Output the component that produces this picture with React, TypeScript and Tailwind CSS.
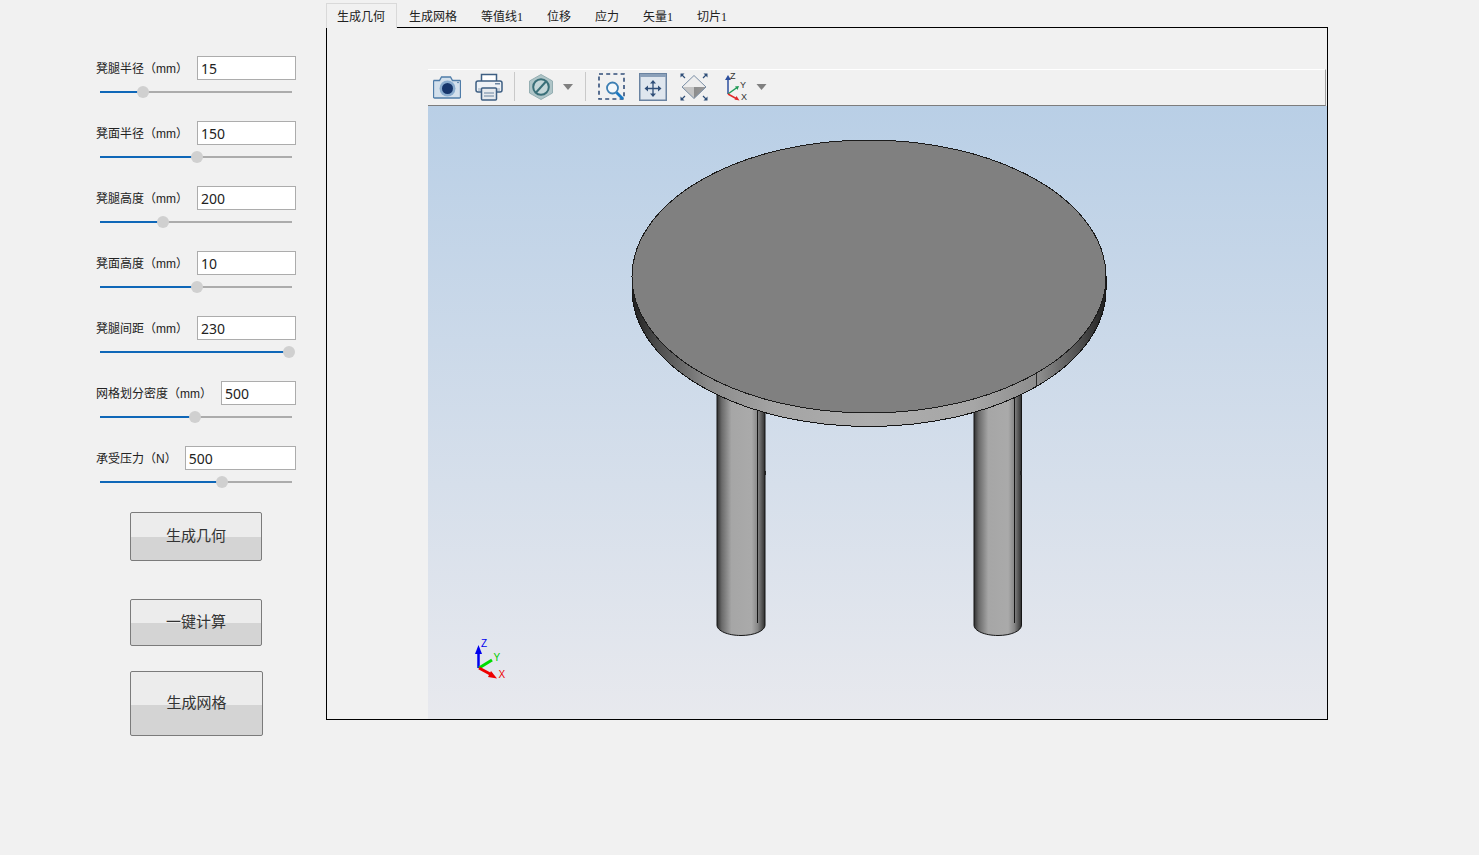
import React from "react";

const sliders = [
  { label: "凳腿半径（mm）", value: "15", pos: 43, labelClass: "" },
  { label: "凳面半径（mm）", value: "150", pos: 97, labelClass: "" },
  { label: "凳腿高度（mm）", value: "200", pos: 63, labelClass: "" },
  { label: "凳面高度（mm）", value: "10", pos: 97, labelClass: "" },
  { label: "凳腿间距（mm）", value: "230", pos: 189, labelClass: "" },
  { label: "网格划分密度（mm）", value: "500", pos: 95, labelClass: "" },
  { label: "承受压力（N）", value: "500", pos: 122, labelClass: "mr-[-1px]" },
];

function ParamRow({ label, value, pos, labelClass }: { label: string; value: string; pos: number; labelClass: string }) {
  return (
    <div className="h-[65px]">
      <div className="flex items-center gap-[9px] h-[24px]">
        <span className={"pt-[2px] text-[12px] leading-none text-[#222] whitespace-nowrap " + labelClass}>{label}</span>
        <input
          readOnly
          value={value}
          className="flex-1 min-w-0 h-[24px] bg-white border border-[#acacac] pl-[3px] pt-[1px] text-[14px] text-[#222] outline-none"
          style={{ fontFamily: '"Noto Sans", sans-serif' }}
        />
      </div>
      <div className="relative ml-[4px] w-[192px] h-[2px] mt-[11px] bg-[#acacac]">
        <div className="h-full bg-[#0f67b8]" style={{ width: pos }} />
        <div
          className="absolute top-[-5px] w-[12px] h-[12px] -ml-[6px] rounded-full bg-[#d0d0d0]"
          style={{ left: pos }}
        />
      </div>
    </div>
  );
}

function ActionButton({ text, className }: { text: string; className: string }) {
  return (
    <button
      className={
        "block ml-[34px] border border-[#7b7b7b] rounded-[2px] text-[15px] text-[#333] " + className
      }
    >
      {text}
    </button>
  );
}

function CameraIcon() {
  return (
    <svg width="28" height="24" viewBox="0 0 28 24" className="shrink-0">
      <path d="M1 5.500h5.500l2-3.500h9l2 3.500h7.500a1 1 0 0 1 .5 1V22a1 1 0 0 1-1 1H1.500a1 1 0 0 1-1-1V6.500z" fill="#d3e0ec" stroke="#4f7ca8" strokeWidth="1.300" />
      <circle cx="14.500" cy="13.500" r="8" fill="#8aacce" />
      <circle cx="14.500" cy="13.500" r="5.500" fill="#17366c" />
      <circle cx="25" cy="7.500" r="0.800" fill="#45729f" />
    </svg>
  );
}

function PrinterIcon() {
  return (
    <svg width="28" height="28" viewBox="0 0 28 28" className="shrink-0">
      <path d="M6.500 8V1.500h15V8" fill="#fff" stroke="#3e5f83" strokeWidth="1.500" />
      <rect x="1" y="8" width="26" height="11" rx="2" fill="#eef2f6" stroke="#3e5f83" strokeWidth="1.500" />
      <rect x="3" y="15" width="22" height="3" fill="#c4ced8" />
      <rect x="20" y="10" width="5" height="1.500" fill="#6b86a3" />
      <rect x="6.500" y="15" width="15" height="12" rx="1" fill="#e6eaee" stroke="#3e5f83" strokeWidth="1.500" />
      <path d="M9 20h10M9 23h10" stroke="#93a7bb" strokeWidth="1.500" />
    </svg>
  );
}

function HiddenIcon() {
  return (
    <svg width="24" height="26" viewBox="0 0 24 26" className="shrink-0">
      <path d="M12 0.500 23.500 7v12L12 25.500.5 19V7z" fill="#afc5c8" stroke="#94aeb2" />
      <circle cx="12" cy="13" r="7.800" fill="#c4d6d8" stroke="#3a6f78" strokeWidth="2" />
      <path d="M7 18.500 17 7.500" stroke="#3a6f78" strokeWidth="2" />
    </svg>
  );
}

function Caret({ width = 10 }: { width?: number }) {
  return (
    <svg width={width} height="6" viewBox="0 0 10 6" className="shrink-0">
      <path d="M0 0h10L5 6z" fill="#808080" />
    </svg>
  );
}

function ZoomBoxIcon() {
  return (
    <svg width="28" height="28" viewBox="0 0 28 28" className="shrink-0">
      <rect x="1" y="1" width="25" height="25" fill="none" stroke="#324f7a" strokeWidth="1.600" strokeDasharray="4 3.200" />
      <circle cx="14.500" cy="15" r="5.500" fill="#f4f8fb" stroke="#3d7fb3" strokeWidth="1.800" />
      <path d="M18.500 19.500 25 26" stroke="#1a78c2" strokeWidth="2.800" />
    </svg>
  );
}

function FitIcon() {
  return (
    <svg width="28" height="28" viewBox="0 0 28 28" className="shrink-0">
      <rect x="0.750" y="0.750" width="26.500" height="26.500" fill="#dfe6ee" stroke="#6a83a1" strokeWidth="1.500" />
      <rect x="1" y="1" width="26" height="3" fill="#8ba0b9" />
      <path d="M14 8v15M7 15.500h14" stroke="#2f4e78" strokeWidth="1.300" />
      <path d="m14 7 3 3.500h-6zM14 24l3-3.500h-6zM5.500 15.500 9 12.500v6zM22.500 15.500 19 12.500v6z" fill="#2f4e78" />
    </svg>
  );
}

function IsoIcon() {
  return (
    <svg width="28" height="28" viewBox="0 0 28 28" className="shrink-0">
      <defs>
        <linearGradient id="iso-low" x1="0" x2="1" y1="0" y2="0">
          <stop offset="0" stopColor="#c4c4c4" />
          <stop offset="0.5" stopColor="#c4c4c4" />
          <stop offset="0.5" stopColor="#8c8c8c" />
          <stop offset="1" stopColor="#9a9a9a" />
        </linearGradient>
      </defs>
      <path d="M14 2.500 26 14H2z" fill="#eeeeee" />
      <path d="M2 14h24L14 25.500z" fill="url(#iso-low)" />
      <path d="M14 2.500 26 14 14 25.500 2 14z" fill="none" stroke="#7a8ea5" strokeWidth="1" />
      <g stroke="#2f4e78" strokeWidth="1.200">
        <path d="M1.500 1.500 5 5M26.500 1.500 23 5M1.500 26.500 5 23M26.500 26.500 23 23" />
      </g>
      <path d="M0.500.500h4l-4 4zM27.500.500h-4l4 4zM.5 27.500h4l-4-4zM27.500 27.500h-4l4-4z" fill="#2f4e78" />
    </svg>
  );
}

function AxesIcon() {
  return (
    <svg width="24" height="29" viewBox="0 0 24 29" className="shrink-0">
      <path d="M4 22V6" stroke="#2d4f9e" strokeWidth="1.500" />
      <path d="M4 3 7 8H1z" fill="#2d4f9e" />
      <path d="M4 22 13 15.500" stroke="#1f9a55" strokeWidth="1.500" />
      <path d="M15 14l-1.500 4-2.500-3.500z" fill="#1f9a55" />
      <path d="M4 22 13 27" stroke="#e02b2b" strokeWidth="1.500" />
      <path d="M15.500 28.500 10.500 27.500l2-3.500z" fill="#e02b2b" />
      <text x="6" y="7" fontSize="9" fontFamily="Liberation Sans" fill="#333">Z</text>
      <text x="16" y="15.500" fontSize="9" fontFamily="Liberation Sans" fill="#333">Y</text>
      <text x="17" y="27.500" fontSize="9" fontFamily="Liberation Sans" fill="#333">X</text>
    </svg>
  );
}

function Toolbar() {
  return (
    <div className="flex items-center h-[37px] pb-[2px] mr-[1px] bg-[#f1f1f1] border-t border-t-white border-b border-b-[#7d7d7d] border-r border-r-[#a0a0a0]">
      <div className="ml-[5px]"><CameraIcon /></div>
      <div className="ml-[14px]"><PrinterIcon /></div>
      <div className="ml-[11px] w-px h-[29px] bg-[#c9c9c9]" />
      <div className="ml-[14px]"><HiddenIcon /></div>
      <div className="ml-[10px]"><Caret /></div>
      <div className="ml-[12px] w-px h-[29px] bg-[#c9c9c9]" />
      <div className="ml-[12px]"><ZoomBoxIcon /></div>
      <div className="ml-[13px]"><FitIcon /></div>
      <div className="ml-[13px]"><IsoIcon /></div>
      <div className="ml-[16px]"><AxesIcon /></div>
      <div className="ml-[8px]"><Caret width={11} /></div>
    </div>
  );
}

function StoolView() {
  return (
    <svg viewBox="428 106 899 613" className="block w-full h-full">
      <defs>
        <linearGradient id="leg" x1="0" x2="1" y1="0" y2="0">
          <stop offset="0" stopColor="#303030" />
          <stop offset="0.1" stopColor="#6a6a6a" />
          <stop offset="0.3" stopColor="#a6a6a6" />
          <stop offset="0.72" stopColor="#aaaaaa" />
          <stop offset="0.85" stopColor="#868686" />
          <stop offset="1" stopColor="#2f2f2f" />
        </linearGradient>
        <linearGradient id="rim" x1="0" x2="1" y1="0" y2="0">
          <stop offset="0" stopColor="#1e1e1e" />
          <stop offset="0.05" stopColor="#4a4a4a" />
          <stop offset="0.16" stopColor="#8a8a8a" />
          <stop offset="0.3" stopColor="#a4a4a4" />
          <stop offset="0.5" stopColor="#adadad" />
          <stop offset="0.72" stopColor="#a6a6a6" />
          <stop offset="0.86" stopColor="#8c8c8c" />
          <stop offset="0.95" stopColor="#4a4a4a" />
          <stop offset="1" stopColor="#1e1e1e" />
        </linearGradient>
      </defs>

      {/* legs */}
      <path d="M717 385V625C717 631 728 635.500 741 635.500S765 631 765 625V385z" fill="url(#leg)" stroke="#151515" />
      <path d="M757.500 385V623" stroke="#151515" />
      <rect x="764" y="471" width="2" height="4" fill="#222" />
      <path d="M974 385V625C974 631 985 635.500 998 635.500S1021.500 631 1021.500 625V385z" fill="url(#leg)" stroke="#151515" />
      <path d="M1014.500 385V623" stroke="#151515" />
      <rect x="1020" y="471" width="2" height="4" fill="#222" />

      {/* seat */}
      <path d="M632 276V289.500A237 137 0 0 0 1106 289.500V276z" fill="url(#rim)" stroke="#151515" shapeRendering="crispEdges" />
      <path d="M1036.500 374V387" stroke="#2a2a2a" />
      <ellipse cx="869" cy="276.500" rx="237" ry="136.500" fill="#808080" stroke="#1c1c1c" shapeRendering="crispEdges" />

      {/* corner triad */}
      <path d="M478.500 668V651" stroke="#0000ee" strokeWidth="2.500" />
      <path d="M478.500 645 482 654H475z" fill="#0000ee" />
      <path d="M479 668 492 660" stroke="#00dd00" strokeWidth="3" />
      <path d="M479 668 492 675" stroke="#ee0000" strokeWidth="3" />
      <path d="M497 678.500 488 677l3-6z" fill="#ee0000" />
      <text x="481" y="647" fontSize="10" fontFamily="Liberation Sans" fill="#0000ee">Z</text>
      <text x="493.500" y="661" fontSize="10" fontFamily="Liberation Sans" fill="#00cc00">Y</text>
      <text x="498.500" y="678" fontSize="10" fontFamily="Liberation Sans" fill="#ee0000">X</text>
    </svg>
  );
}

const tabs = [
  { text: "生成网格", digit: "" },
  { text: "等值线", digit: "1" },
  { text: "位移", digit: "" },
  { text: "应力", digit: "" },
  { text: "矢量", digit: "1" },
  { text: "切片", digit: "1" },
];

export default function App() {
  return (
    <div
      className="flex w-[1479px] h-[855px] overflow-hidden bg-[#f1f1f1]"
      style={{ fontFamily: '"Liberation Sans", "Noto Sans CJK SC", sans-serif' }}
    >
      <div className="w-[326px] shrink-0 pt-[56px] pl-[96px] pr-[30px]">
        {sliders.map((s) => (
          <ParamRow key={s.label} {...s} />
        ))}
        <ActionButton text="生成几何" className="mt-[1px] w-[132px] h-[49px] bg-[linear-gradient(#ececec_50%,#d4d4d4_50%)]" />
        <ActionButton text="一键计算" className="mt-[38px] w-[132px] h-[47px] bg-[linear-gradient(#ececec_50%,#d4d4d4_50%)]" />
        <ActionButton text="生成网格" className="mt-[25px] w-[133px] h-[65px] bg-[linear-gradient(#ececec_52%,#d4d4d4_52%)]" />
      </div>

      <div className="w-[1002px] shrink-0 pt-[3px]">
        <div className="flex h-[24px] text-[12px] text-[#222]">
          <div className="h-[25px] pl-[10px] pr-[11px] pt-[2px] flex items-center bg-[#f1f1f1] border border-[#d9d9d9] border-b-0 relative z-10">
            生成几何
          </div>
          {tabs.map((t) => (
            <div key={t.text} className="px-[12px] pt-[4px] flex items-center">
              {t.text}
              {t.digit && <span className="font-['Liberation_Serif'] text-[12px]">{t.digit}</span>}
            </div>
          ))}
        </div>
        <div className="h-[693px] border border-black pl-[101px] pt-[41px] flex flex-col">
          <Toolbar />
          <div className="flex-1 min-h-0 bg-[linear-gradient(#b9cfe6,#e8e9ee)]">
            <StoolView />
          </div>
        </div>
      </div>
    </div>
  );
}
